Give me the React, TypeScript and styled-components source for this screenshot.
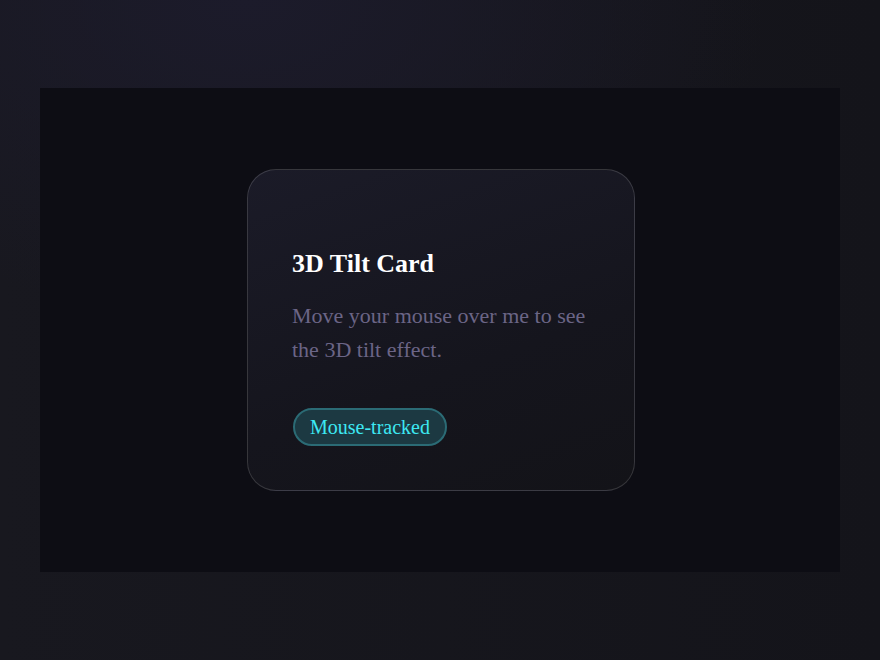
import React from "react";
import styled, { createGlobalStyle } from "styled-components";

const GlobalStyle = createGlobalStyle`
  html, body {
    margin: 0;
    padding: 0;
    height: 100%;
  }
  body {
    font-family: "Liberation Serif", "Times New Roman", serif;
    background: #15151c;
  }
  #root {
    min-height: 100%;
  }
`;

const Page = styled.div`
  width: 880px;
  height: 660px;
  box-sizing: border-box;
  padding: 88px 40px;
  background:
    radial-gradient(ellipse 520px 320px at 28% 0%, #1c1b2b 0%, rgba(28, 27, 43, 0) 100%),
    linear-gradient(90deg, #18181f 0%, #14141a 100%);
`;

const Stage = styled.div`
  height: 484px;
  background: #0d0d14;
  display: flex;
  align-items: center;
  justify-content: center;
  perspective: 1000px;
`;

const Card = styled.div`
  width: 388px;
  height: 322px;
  box-sizing: border-box;
  padding: 0 44px 44px;
  border: 1.5px solid rgba(255, 255, 255, 0.15);
  border-radius: 29px;
  background: linear-gradient(160deg, #1b1b28 0%, #15151d 60%, #131318 100%);
  display: flex;
  flex-direction: column;
  justify-content: flex-end;
  margin-left: 2px;
`;

const Title = styled.h2`
  margin: 0 0 20px;
  font-size: 26px;
  font-weight: 700;
  color: #ffffff;
  line-height: 1.15;
`;

const Description = styled.p`
  margin: 0 0 41px;
  font-size: 22px;
  line-height: 34px;
  color: #6b6586;
`;

const Badge = styled.span`
  align-self: flex-start;
  margin-left: 1px;
  height: 38px;
  box-sizing: border-box;
  padding: 0 15px;
  display: inline-flex;
  align-items: center;
  border-radius: 19px;
  border: 2px solid #2b6b75;
  background: #1c3942;
  color: #3de8f2;
  font-size: 20px;
`;

export default function App() {
  return (
    <>
      <GlobalStyle />
      <Page>
        <Stage>
          <Card>
            <Title>3D Tilt Card</Title>
            <Description>Move your mouse over me to see the 3D tilt effect.</Description>
            <Badge>Mouse-tracked</Badge>
          </Card>
        </Stage>
      </Page>
    </>
  );
}
